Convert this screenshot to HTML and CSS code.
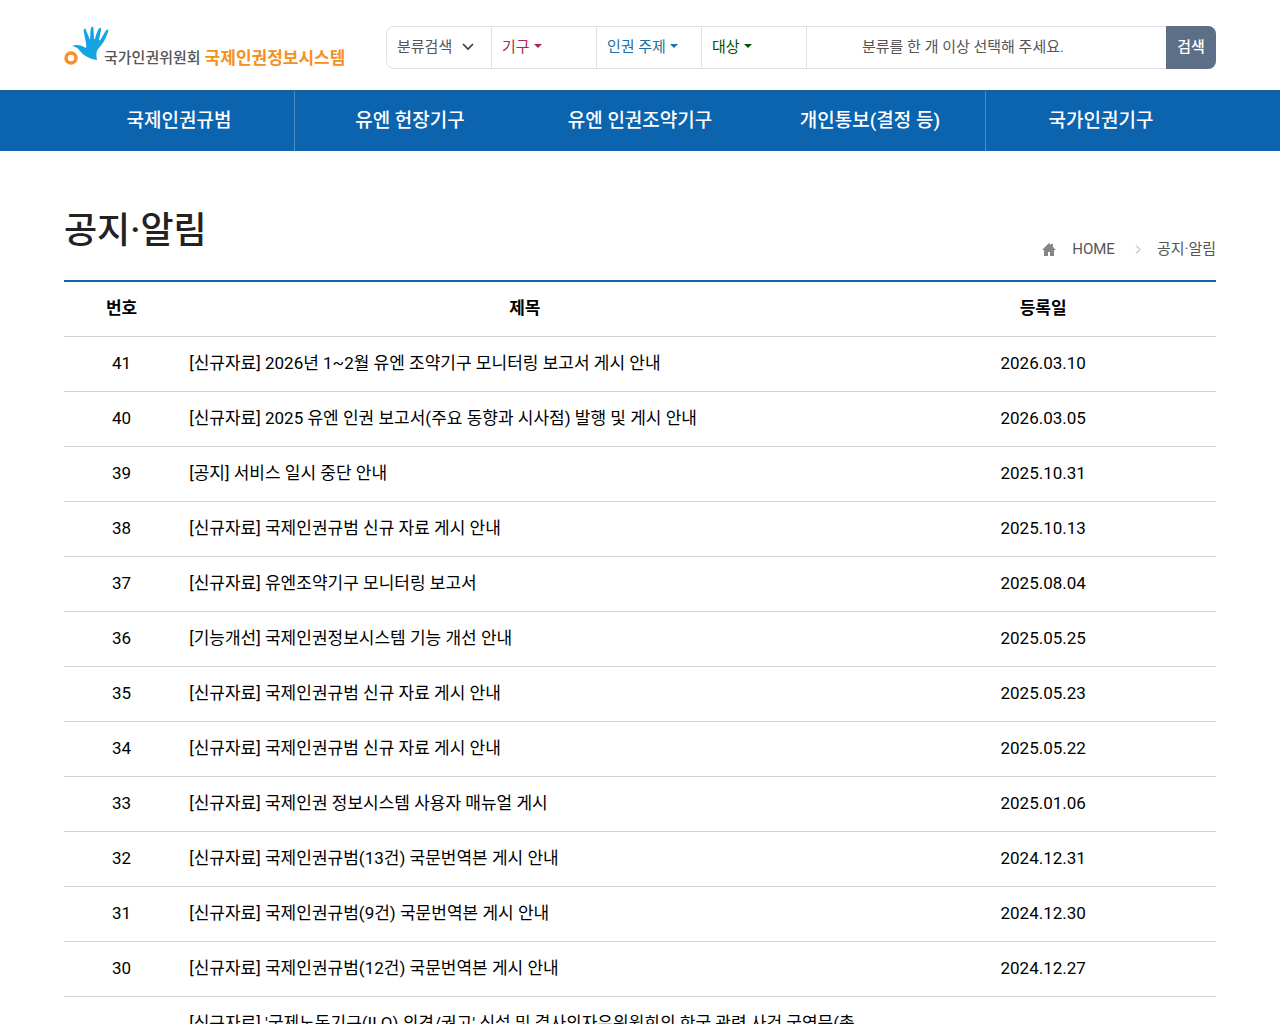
FILE: index.html
```
<!DOCTYPE html>
<html lang="ko">
<head>
    <meta charset="UTF-8">
    <meta name="viewport" content="width=device-width, initial-scale=1.0">
    <title>공지·알림 | 국제인권정보시스템</title>
    <link rel="stylesheet" href="styles.css">
</head>
<body>
    <header class="container header">
        <a href="#" class="logo">
            <svg class="logo-mark" viewBox="0 0 44 42" aria-hidden="true">
                <path fill="#12a5e2" d="M8 20C12 18 17 19 22 22C23 19 21 13 20 7C19 3 21 1 22 4L26 14C26.500 10 26 5 27 2C28 0 29.500 0 29.500 3L30 13L31 13C32 9 33 5 35 2.500C36.500 1 37.500 2 37 4L35 14L36 14.500L41 6C43 2.500 45 3 44 6C42 12 39 18 34 23C32 26 32 29 33 34C26 33 20 30 16 25C14 22 12 21 8 20Z"/>
                <circle cx="7" cy="32" r="5" fill="none" stroke="#f5902a" stroke-width="3.5"/>
            </svg>
            <span class="logo-org">국가인권위원회</span>
            <span class="logo-system">국제인권정보시스템</span>
        </a>
        <form class="search">
            <select class="search-type" aria-label="검색 구분">
                <option>분류검색</option>
                <option>통합검색</option>
            </select>
            <button type="button" class="filter filter-org">기구</button>
            <button type="button" class="filter filter-topic">인권 주제</button>
            <button type="button" class="filter filter-target">대상</button>
            <input type="text" class="search-text" placeholder="분류를 한 개 이상 선택해 주세요." aria-label="선택한 분류">
            <button type="submit" class="search-btn">검색</button>
        </form>
    </header>

    <nav class="gnb">
        <ul class="container">
            <li><a href="#">국제인권규범</a></li>
            <li><a href="#">유엔 헌장기구</a></li>
            <li><a href="#">유엔 인권조약기구</a></li>
            <li><a href="#">개인통보(결정 등)</a></li>
            <li><a href="#">국가인권기구</a></li>
        </ul>
    </nav>

    <main class="container">
        <div class="page-head">
            <h1>공지·알림</h1>
            <div class="breadcrumb">
                <svg class="icon-home" viewBox="0 0 14 13" aria-hidden="true">
                    <path fill="#858585" d="M7 0L9 2V1H11V4L14 7H12V13H8V9H6V13H2V7H0Z"/>
                </svg>
                <a href="#">HOME</a>
                <svg class="icon-next" viewBox="0 0 6 9" aria-hidden="true">
                    <path fill="none" stroke="#999" d="M1 .5L5 4.5L1 8.5"/>
                </svg>
                <span>공지·알림</span>
            </div>
        </div>

        <table class="board">
            <thead>
                <tr><th class="num">번호</th><th class="title">제목</th><th class="date">등록일</th></tr>
            </thead>
            <tbody>
                <tr><td>41</td><td><a href="#">[신규자료] 2026년 1~2월 유엔 조약기구 모니터링 보고서 게시 안내</a></td><td>2026.03.10</td></tr>
                <tr><td>40</td><td><a href="#">[신규자료] 2025 유엔 인권 보고서(주요 동향과 시사점) 발행 및 게시 안내</a></td><td>2026.03.05</td></tr>
                <tr><td>39</td><td><a href="#">[공지] 서비스 일시 중단 안내</a></td><td>2025.10.31</td></tr>
                <tr><td>38</td><td><a href="#">[신규자료] 국제인권규범 신규 자료 게시 안내</a></td><td>2025.10.13</td></tr>
                <tr><td>37</td><td><a href="#">[신규자료] 유엔조약기구 모니터링 보고서</a></td><td>2025.08.04</td></tr>
                <tr><td>36</td><td><a href="#">[기능개선] 국제인권정보시스템 기능 개선 안내</a></td><td>2025.05.25</td></tr>
                <tr><td>35</td><td><a href="#">[신규자료] 국제인권규범 신규 자료 게시 안내</a></td><td>2025.05.23</td></tr>
                <tr><td>34</td><td><a href="#">[신규자료] 국제인권규범 신규 자료 게시 안내</a></td><td>2025.05.22</td></tr>
                <tr><td>33</td><td><a href="#">[신규자료] 국제인권 정보시스템 사용자 매뉴얼 게시</a></td><td>2025.01.06</td></tr>
                <tr><td>32</td><td><a href="#">[신규자료] 국제인권규범(13건) 국문번역본 게시 안내</a></td><td>2024.12.31</td></tr>
                <tr><td>31</td><td><a href="#">[신규자료] 국제인권규범(9건) 국문번역본 게시 안내</a></td><td>2024.12.30</td></tr>
                <tr><td>30</td><td><a href="#">[신규자료] 국제인권규범(12건) 국문번역본 게시 안내</a></td><td>2024.12.27</td></tr>
                <tr><td>29</td><td><a href="#">[신규자료] '국제노동기구(ILO) 의견/권고' 신설 및 결사의자유위원회의 한국 관련 사건 국영문(총 12건) 게시 안내</a></td><td>2024.12.20</td></tr>
            </tbody>
        </table>
    </main>
</body>
</html>
```
FILE: styles.css
```
* {
    box-sizing: border-box;
}
body {
    margin: 0;
    font-family: Roboto, "Noto Sans CJK KR", sans-serif;
    font-size: 17px;
    line-height: 24px;
    color: #000;
    background-color: #fff;
}
a {
    color: inherit;
    text-decoration: none;
}
button, input, select {
    font-family: inherit;
    font-size: 15px;
}
.container {
    width: 90%;
    margin: 0 auto;
}

/* header */
.header {
    display: flex;
    align-items: center;
    height: 90px;
    padding-top: 4px;
}
.logo {
    width: 322px;
    display: flex;
    align-items: flex-end;
    white-space: nowrap;
}
.logo-mark {
    width: 44px;
    height: 42px;
    overflow: visible;
}
.logo-org,
.logo-system {
    line-height: 20px;
}
.logo-org {
    margin-right: 4px;
    margin-left: -4px;
    font-size: 15px;
    font-weight: 500;
    color: #555;
}
.logo-system {
    font-weight: 700;
    color: #f5901e;
}
.search {
    flex: 1;
    display: flex;
    height: 43px;
    border: 1px solid #dee2e6;
    border-radius: 8px;
}
.search-type {
    width: 104px;
    padding: 0 10px;
    border: 0;
    color: #555;
    appearance: none;
    background: url("data:image/svg+xml,%3Csvg xmlns='http://www.w3.org/2000/svg' viewBox='0 0 12 8'%3E%3Cpath d='M1 1l5 5 5-5' fill='none' stroke='%23343a40' stroke-width='1.6'/%3E%3C/svg%3E") no-repeat right 17px center / 12px 8px;
}
.filter {
    width: 105px;
    padding: 0 10px 4px;
    border: 0;
    border-left: 1px solid #dee2e6;
    text-align: left;
    background: none;
    cursor: pointer;
}
.filter::after {
    content: "";
    display: inline-block;
    margin-left: 4px;
    vertical-align: 4px;
    border-top: 4px solid;
    border-right: 4px solid transparent;
    border-left: 4px solid transparent;
}
.filter-org {
    color: #a82b4d;
}
.filter-topic {
    color: #1b6fa3;
}
.filter-target {
    color: #005200;
}
.search-text {
    flex: 1;
    min-width: 0;
    padding: 0 0 0 55px;
    border: 0;
    border-left: 1px solid #dee2e6;
    background: none;
}
.search-text::placeholder {
    color: #555;
}
.search-btn {
    width: 50px;
    margin: -1px -1px -1px 0;
    padding: 0 0 4px;
    border: 0;
    border-radius: 0 8px 8px 0;
    font-weight: 500;
    color: #fff;
    background-color: #5c6f86;
    cursor: pointer;
}

/* main menu */
.gnb {
    background-color: #0c63ae;
    border-top: 1px solid #1d5c94;
}
.gnb ul {
    display: flex;
    padding: 0;
    list-style: none;
}
.gnb li {
    flex: 1;
    text-align: center;
}
.gnb li:nth-child(3n + 1) {
    border-right: 1px solid #4a8cc5;
}
.gnb a {
    display: block;
    font-size: 19px;
    font-weight: 500;
    line-height: 60px;
    color: #fff;
}

/* page title */
.page-head {
    display: flex;
    justify-content: space-between;
    align-items: flex-end;
    padding: 50px 0 19px;
}
h1 {
    margin: 4px 0;
    font-size: 36px;
    font-weight: 500;
    line-height: 52px;
    color: #222;
}
.breadcrumb {
    display: flex;
    align-items: center;
    font-size: 15px;
    color: #555;
}
.icon-home {
    width: 14px;
    height: 13px;
    margin-right: 16px;
}
.icon-next {
    width: 6px;
    height: 9px;
    margin: 0 16px 0 20px;
}

/* notice list */
.board {
    width: 100%;
    table-layout: fixed;
    border-collapse: collapse;
    border-top: 2px solid #1a60a6;
}
.board th, .board td {
    padding: 14px 10px 16px;
    border-bottom: 1px solid #d3d3d3;
    text-align: center;
}
.board td:nth-child(2) {
    text-align: left;
}
.board .num {
    width: 10%;
}
.board .title {
    width: 60%;
}
.board .date {
    width: 30%;
}
```
